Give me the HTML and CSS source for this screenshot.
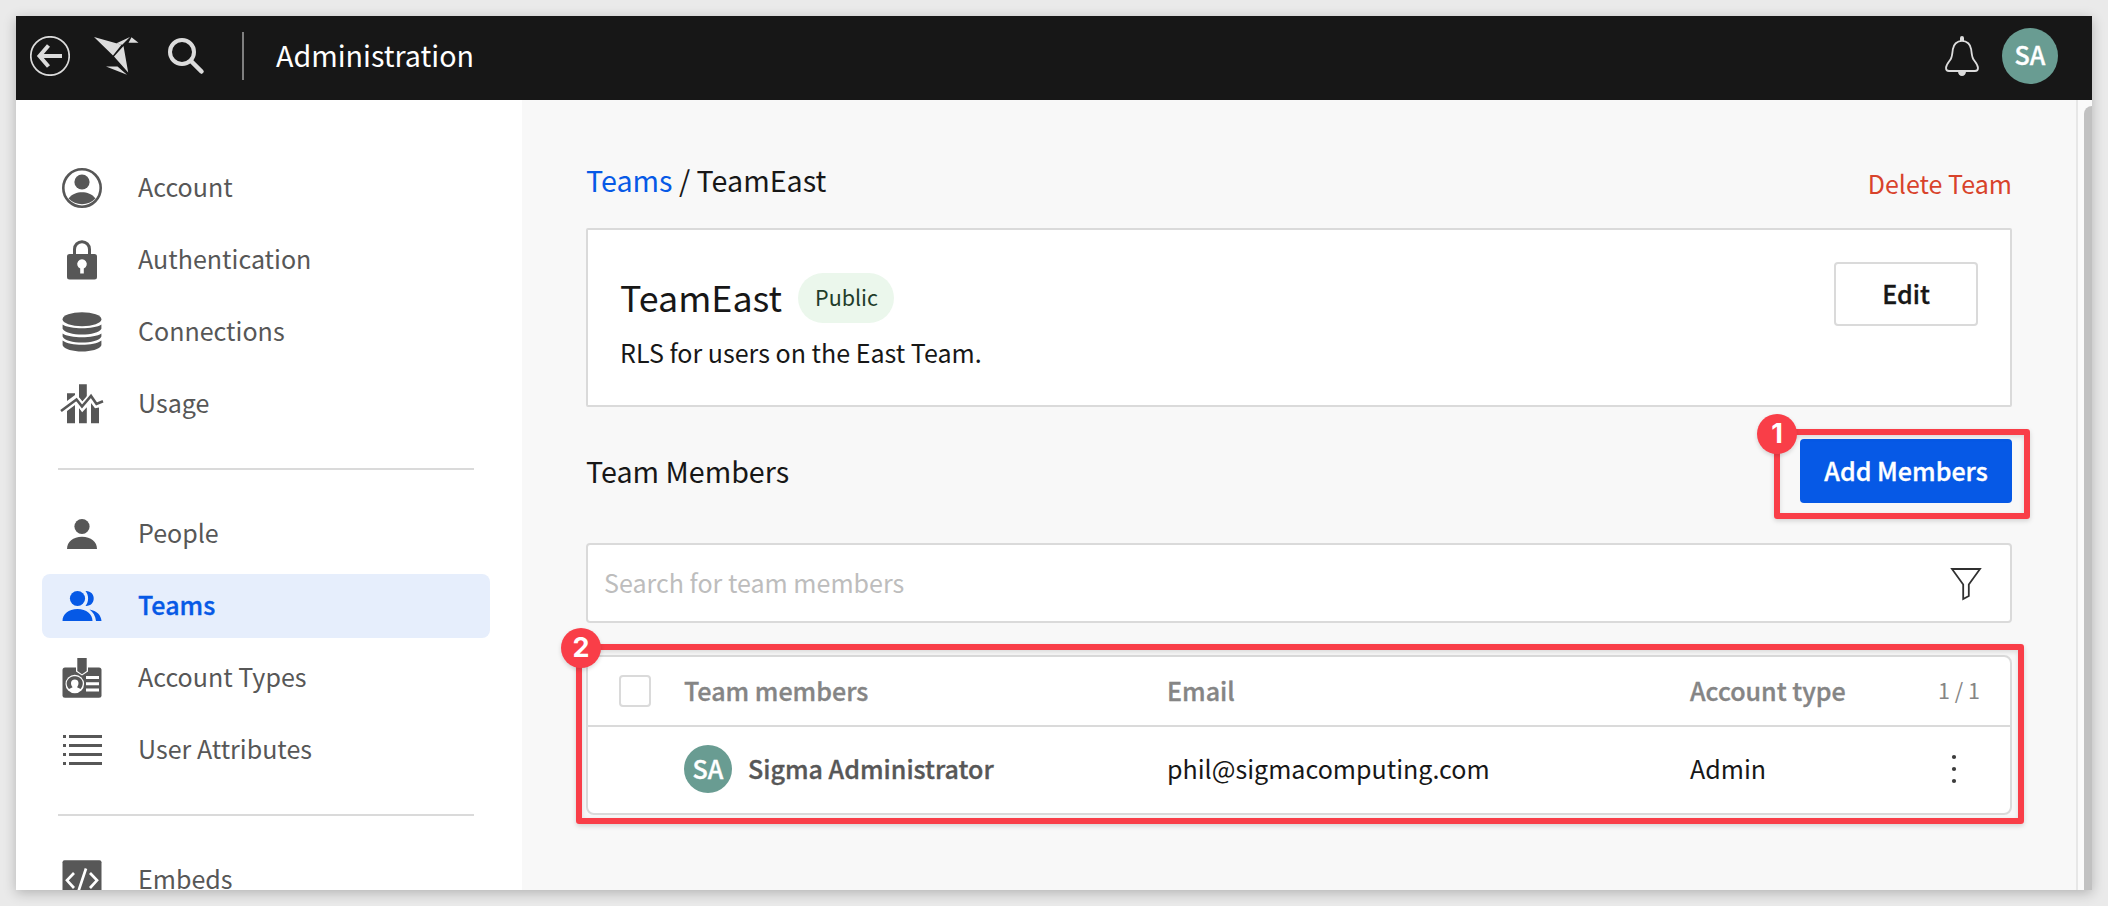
FILE: index.html
```html
<!DOCTYPE html>
<html lang="en">
<head>
<meta charset="utf-8">
<title>Administration</title>
<link rel="stylesheet" href="styles.css">
</head>
<body>
<div class="window">
  <header class="topbar">
    <svg class="icon-back" viewBox="0 0 40 40" width="40" height="40"><circle cx="20" cy="20" r="19.2" fill="none" stroke="#dcdcdc" stroke-width="1.7"/><path d="M32 20H9.500M18.500 9.500L9.500 20l9 10.500" fill="none" stroke="#dcdcdc" stroke-width="4"/></svg>
    <svg class="icon-bird" viewBox="0 0 46 40" width="46" height="40" fill="#dcdcdc"><path d="M0 1L27.500 8.800 19 19.500zM22.500 7.300L36 1 28.200 8.700zM37.500 1.200L44.500 6.700H34.500zM29.500 10L34.200 36.500 20 20.500zM12 30.400h11.500L33 38.800z"/></svg>
    <svg class="icon-search" viewBox="0 0 38 38" width="38" height="38" fill="none" stroke="#dcdcdc"><circle cx="15" cy="15" r="12" stroke-width="4"/><path d="M24 24l10.500 10.500" stroke-width="4.500" stroke-linecap="round"/></svg>
    <span class="topbar-rule"></span>
    <h1 class="topbar-title">Administration</h1>
    <svg class="icon-bell" viewBox="0 0 36 40" width="36" height="40"><path d="M18 4.800c-5 0-8.600 3.600-9.200 8.600-.5 4.500-.6 7-2 9.600-1.500 2.700-4.800 5.500-4.800 9 0 2 1.200 3 3 3h26c1.800 0 3-1 3-3 0-3.500-3.300-6.300-4.800-9-1.400-2.600-1.500-5.100-2-9.600-.6-5-4.200-8.600-9.200-8.600z" fill="none" stroke="#dcdcdc" stroke-width="1.800"/><path d="M16 5V2a2 2 0 0 1 4 0v3zM14 35.500h8a4 4.500 0 0 1-8 0z" fill="#dcdcdc"/></svg>
    <span class="avatar avatar-lg">SA</span>
  </header>
  <div class="body">
    <nav class="sidebar">
      <ul class="nav-group">
        <li class="nav-item"><svg class="nav-icon" viewBox="0 0 40 40"><circle cx="20" cy="20" r="18.700" fill="none" stroke="currentColor" stroke-width="2.600"/><circle cx="20" cy="14" r="7.600"/><path d="M6.500 30.500C10 26 15 24.300 20 24.300S30 26 33.500 30.500A19 19 0 0 1 6.500 30.500z"/></svg><span>Account</span></li>
        <li class="nav-item"><svg class="nav-icon" viewBox="0 0 40 40"><path d="M12.500 15V9.200a7.500 7.500 0 0 1 15 0V15" fill="none" stroke="currentColor" stroke-width="3"/><path fill-rule="evenodd" d="M7.500 14h25a2.500 2.500 0 0 1 2.500 2.500v20.500a2.500 2.500 0 0 1-2.500 2.500h-25A2.500 2.500 0 0 1 5 37V16.500A2.500 2.500 0 0 1 7.500 14zM18.200 28.500v5h3.600v-5a4.800 4.800 0 1 0-3.600 0z"/></svg><span>Authentication</span></li>
        <li class="nav-item"><svg class="nav-icon" viewBox="0 0 40 40"><ellipse cx="20" cy="7.200" rx="19.400" ry="7"/><path d="M.6 12.500C8 17.600 32 17.600 39.400 12.500v4.300C36 24.500 4 24.500.6 16.800zM.6 21.500C8 26.500 32 26.500 39.400 21.500v3C36 32.500 4 32.500.6 24.500zM.6 28.500C8 34.300 32 34.300 39.400 28.500v4.800C36 41.600 4 41.600.6 33.300z"/></svg><span>Connections</span></li>
        <li class="nav-item"><svg class="nav-icon nav-icon-wide" viewBox="-2 0 44 40"><path d="M5 9.300h8V11L5 17zM17 .2h7.800v13.300L20.500 17.500 17 13.300zM5 27l8-6v18.200H5zM17 24l3.200 4.200 4.600-5v16H17zM29 19l4 5.300 4-.8v15.700h-8z"/><path d="M-1 27L14.500 15.500 20 22.500 29 12l5.500 8L41 17.300" fill="none" stroke="#fff" stroke-width="6"/><path d="M-1 27L14.500 15.500 20 22.500 29 12l5.500 8L41 17.300" fill="none" stroke="currentColor" stroke-width="2.600"/></svg><span>Usage</span></li>
      </ul>
      <hr class="nav-rule">
      <ul class="nav-group">
        <li class="nav-item"><svg class="nav-icon" viewBox="0 0 40 40"><circle cx="20" cy="12.500" r="7.600"/><path d="M5 35C5 28 11 22.800 20 22.800S35 28 35 35z"/></svg><span>People</span></li>
        <li class="nav-item nav-item-active"><svg class="nav-icon" viewBox="0 0 40 40"><circle cx="15.500" cy="12.500" r="7.600"/><path d="M.5 35C.5 28 6.500 23 15.500 23S30.500 28 30.500 35zM23.500 5C34.500 4.500 34.500 20.500 23.500 20 27 15.500 27 9.500 23.500 5zM27.500 23.500C35 25 39 29 39.500 35H34C33.500 30 31 26 27.500 23.500z"/></svg><span>Teams</span></li>
        <li class="nav-item"><svg class="nav-icon" viewBox="0 0 40 40"><rect x=".5" y="9.500" width="39" height="30.300" rx="2.500"/><path d="M14 0h12v13.500l-6 4-6-4z" fill="#fff"/><path d="M15.300 0h9.400v13l-4.700 3.300-4.700-3.300z"/><circle cx="12.800" cy="26" r="9.300" fill="#fff"/><path d="M7 31C1.500 24 7 18.200 12.800 18.200S24 24 18.600 31L15 29.300C17.500 26 17 21.500 12.800 21.500S8 26 10.600 29.300z"/><path d="M24 19.500h13M24 25.800h13M24 32h13" fill="none" stroke="#fff" stroke-width="3"/></svg><span>Account Types</span></li>
        <li class="nav-item"><svg class="nav-icon" viewBox="0 0 40 40" shape-rendering="crispEdges"><path d="M.5 5h3v3h-3zM6.500 5h33v3h-33zM.5 14h3v3h-3zM6.500 14h33v3h-33zM.5 23h3v3h-3zM6.500 23h33v3h-33zM.5 32h3v3h-3zM6.500 32h33v3h-33z"/></svg><span>User Attributes</span></li>
      </ul>
      <hr class="nav-rule">
      <ul class="nav-group">
        <li class="nav-item"><svg class="nav-icon" viewBox="0 0 40 40"><rect x=".5" y=".3" width="39" height="39" rx="2"/><path d="M12 13L5 20.300l7 7.700M28 13l7 7.300-7 7.700M24 8.500L16.500 31" fill="none" stroke="#fff" stroke-width="2.700"/></svg><span>Embeds</span></li>
      </ul>
    </nav>
    <main class="content">
      <div class="crumb-row">
        <div class="crumbs"><a class="crumb-link">Teams</a> / TeamEast</div>
        <a class="delete-link">Delete Team</a>
      </div>
      <section class="team-card">
        <div class="team-info">
          <div class="team-heading"><h2 class="team-name">TeamEast</h2><span class="pill"><span>Public</span></span></div>
          <p class="team-desc">RLS for users on the East Team.</p>
        </div>
        <button class="btn btn-edit"><span>Edit</span></button>
      </section>
      <div class="members-row">
        <h3 class="members-title">Team Members</h3>
        <div class="marked">
          <button class="btn btn-primary"><span>Add Members</span></button>
          <div class="callout callout-one"><span class="badge">1</span></div>
        </div>
      </div>
      <div class="search-box">
        <span class="search-hint">Search for team members</span>
        <svg class="icon-filter" viewBox="0 0 32 34" width="32" height="34"><path d="M2 2h28L18.800 17.500V29l-5.600 3V17.500z" fill="none" stroke="#303030" stroke-width="1.800"/></svg>
      </div>
      <div class="marked">
        <div class="table">
          <div class="row row-head">
            <span class="checkbox"></span><span>Team members</span><span>Email</span><span>Account type</span><span class="count">1 / 1</span>
          </div>
          <div class="row">
            <span></span>
            <span class="member"><span class="avatar">SA</span><span class="member-name">Sigma Administrator</span></span>
            <span>phil@sigmacomputing.com</span><span>Admin</span>
            <svg class="icon-more" viewBox="0 0 6 30" width="6" height="30"><circle cx="3" cy="3" r="2.100"/><circle cx="3" cy="15" r="2.100"/><circle cx="3" cy="27" r="2.100"/></svg>
          </div>
        </div>
        <div class="callout callout-two"><span class="badge">2</span></div>
      </div>
    </main>
    <div class="scroll-track"><div class="scroll-thumb"></div></div>
  </div>
</div>
</body>
</html>
```

FILE: styles.css
```css
* { box-sizing: border-box; margin: 0; padding: 0; }
body {
  background: #eaeaea;
  padding: 16px;
  height: 906px;
  overflow: hidden;
  font-family: "Noto Sans CJK SC", "Noto Sans", sans-serif;
  font-size: 25.06px;
  line-height: 32px;
  color: #171717;
  white-space: nowrap;
}
h1, h2, h3 { font-weight: 400; }
ul { list-style: none; }
.window {
  display: flex;
  flex-direction: column;
  width: 2076px;
  height: 874px;
  background: #fff;
  box-shadow: 0 3px 12px rgba(0, 0, 0, .24);
}
.topbar {
  display: flex;
  align-items: center;
  flex: none;
  height: 84px;
  padding: 0 34px 4px 14px;
  background: #171717;
  color: #fff;
}
.icon-bird { margin-left: 24px; }
.icon-search { margin-left: 27px; }
.topbar-rule { width: 2px; height: 48px; margin-left: 37px; background: #7f7f7f; }
.topbar-title { margin-left: 32px; padding-bottom: 3px; font-size: 28.65px; }
.icon-bell { margin-left: auto; }
.avatar {
  display: flex;
  align-items: center;
  justify-content: center;
  flex: none;
  width: 48px;
  height: 48px;
  padding-bottom: 2px;
  border-radius: 50%;
  background: #699c92;
  color: #fff;
}
.avatar, .nav-item-active, .btn, .row-head, .member-name {
  font-weight: 500;
  -webkit-text-stroke: .35px currentColor;
}
.avatar-lg { width: 56px; height: 56px; padding-bottom: 4px; margin-left: 22px; }
.body { display: flex; flex: 1; min-height: 0; }
.sidebar { width: 506px; flex: none; padding: 56px 32px 0 26px; overflow: hidden; color: #575757; }
.nav-group { display: grid; gap: 8px; }
.nav-item { display: flex; align-items: center; gap: 36px; height: 64px; padding-left: 20px; border-radius: 8px; }
.nav-item span { padding-bottom: 4px; }
.nav-item-active { background: #e6eefc; color: #0659e6; }
.nav-icon { width: 40px; height: 40px; flex: none; fill: currentColor; }
.nav-icon-wide { width: 44px; margin: 0 -2px; }
.nav-rule { height: 2px; margin: 32px 16px; border: 0; background: #dadada; }
.content { flex: 1; padding: 0 64px; background: #f8f8f8; }
.crumb-row { display: flex; justify-content: space-between; padding-top: 64px; height: 128px; }
.crumbs { font-size: 28.65px; }
.crumb-link { color: #0659e6; }
.delete-link { padding-top: 3px; color: #d8432b; }
.team-card {
  display: flex;
  justify-content: space-between;
  height: 179px;
  padding: 32px;
  border: 2px solid #dadada;
  border-radius: 2px;
  background: #fff;
}
.team-heading { display: flex; gap: 16px; align-items: center; padding-top: 11px; height: 61px; }
.team-name { font-size: 35.8px; padding-bottom: 4px; }
.pill { display: flex; align-items: center; height: 50px; padding: 0 16px 2px 17px; border-radius: 25px; background: #ebf7ec; color: #1f3d2a; font-size: 21.5px; }
.team-desc { padding-top: 13px; }
.btn {
  display: flex;
  align-items: center;
  justify-content: center;
  height: 64px;
  padding-bottom: 2px;
  border: 0;
  border-radius: 4px;
  font-family: inherit;
  font-size: inherit;
  line-height: inherit;
  color: inherit;
}
.btn-edit { width: 144px; border: 2px solid #dadada; background: #fff; }
.btn-primary { width: 212px; background: #0659e6; color: #fff; }
.members-row { display: flex; justify-content: space-between; align-items: center; margin-top: 32px; }
.members-title { font-size: 28.65px; }
.marked { position: relative; }
.callout {
  position: absolute;
  border: 6px solid #f93e48;
  border-radius: 3px;
  box-shadow: 0 2px 5px rgba(0, 0, 0, .15), inset 0 2px 5px rgba(0, 0, 0, .12);
}
.callout-one { left: -26px; top: -10px; right: -18px; bottom: -16px; }
.callout-two { left: -10px; top: -11px; right: -12px; bottom: -9px; }
.badge {
  position: absolute;
  left: -23px;
  top: -21px;
  width: 40px;
  height: 40px;
  border-radius: 50%;
  background: #f93e48;
  box-shadow: 0 2px 4px rgba(0, 0, 0, .15);
  color: #fff;
  font: 700 27px/39px Inter, sans-serif;
  text-align: center;
}
.callout-two .badge { left: -21px; top: -22px; }
.search-box {
  display: flex;
  align-items: center;
  justify-content: space-between;
  height: 80px;
  margin-top: 40px;
  padding: 0 28px 0 16px;
  border: 2px solid #dadada;
  border-radius: 4px;
  background: #fff;
}
.search-hint { padding-bottom: 2px; color: #bdbdbd; }
.icon-filter { margin-top: 1px; }
.table { margin-top: 32px; height: 160px; border: 2px solid #dadada; border-radius: 8px; background: #fff; }
.row { display: grid; grid-template-columns: 65px 483px 523px 248px 1fr; align-items: center; height: 84px; padding-left: 31px; }
.row > span { padding-bottom: 3px; }
.row-head { height: 70px; border-bottom: 2px solid #dadada; color: #858585; }
.row-head > span { padding-bottom: 2px; }
.checkbox { width: 32px; height: 32px; border: 2px solid #dadada; border-radius: 4px; }
.row-head .count { font-size: 21.5px; font-weight: 400; -webkit-text-stroke: 0; }
.member { display: flex; align-items: center; gap: 16px; }
.row .member { padding: 0; }
.member-name { padding-bottom: 2px; color: #575757; }
.icon-more { margin-left: 13px; fill: #3c3c3c; }
.scroll-track { width: 16px; flex: none; padding: 6px 0 0 6px; border-left: 2px solid #e7e7e7; background: #fafafa; }
.scroll-thumb { height: 100%; border-radius: 8px 0 0 0; background: #c1c1c1; }
```
